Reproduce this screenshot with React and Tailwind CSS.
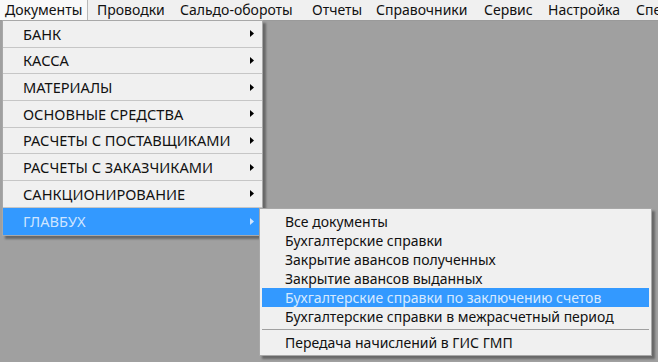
const TOP = [
  { label: "Документы", w: "w-[88px]", pl: "pl-[5px]", open: true },
  { label: "Проводки", w: "w-[86px]", pl: "pl-[9px]" },
  { label: "Сальдо-обороты", w: "w-[131px]", pl: "pl-[6px]" },
  { label: "Отчеты", w: "w-[64px]", pl: "pl-[7px]" },
  { label: "Справочники", w: "w-[108px]", pl: "pl-[7px]" },
  { label: "Сервис", w: "w-[64px]", pl: "pl-[7px]" },
  { label: "Настройка", w: "w-[88px]", pl: "pl-[7px]" },
  { label: "Специальные", w: "w-[100px]", pl: "pl-[7px]" },
];

const SECTIONS = [
  "БАНК",
  "КАССА",
  "МАТЕРИАЛЫ",
  "ОСНОВНЫЕ СРЕДСТВА",
  "РАСЧЕТЫ С ПОСТАВЩИКАМИ",
  "РАСЧЕТЫ С ЗАКАЗЧИКАМИ",
  "САНКЦИОНИРОВАНИЕ",
  "ГЛАВБУХ",
];

const GLAVBUH = [
  "Все документы",
  "Бухгалтерские справки",
  "Закрытие авансов полученных",
  "Закрытие авансов выданных",
  "Бухгалтерские справки по заключению счетов",
  "Бухгалтерские справки в межрасчетный период",
];

function Arrow({ light }) {
  return (
    <svg width="4" height="7" viewBox="0 0 4 7" className="shrink-0">
      <path d="M0 0 L4 3.5 L0 7 Z" fill={light ? "#cfe5ff" : "#000"} />
    </svg>
  );
}

export default function App() {
  return (
    <div className="relative w-[658px] h-[362px] overflow-hidden bg-[#a0a0a0] font-['Noto_Sans',sans-serif] text-[14px] text-[#111]">
      {/* ── Menu bar ── */}
      <div className="flex h-[21px] bg-[#f0f0f0] border-b border-[#9a9a9a] whitespace-nowrap overflow-hidden">
        {TOP.map((t) => (
          <div
            key={t.label}
            className={`${t.w} ${t.pl} shrink-0 flex items-center leading-none ${
              t.open ? "bg-[#f9f9f9] border-r border-[#b8b8b8]" : ""
            }`}
          >
            {t.label}
          </div>
        ))}
      </div>

      {/* ── Документы dropdown ── */}
      <div className="absolute left-[2px] top-[20px] w-[261px] bg-[#f0f0f0] border border-[#a8a8a8] text-[14.6px] shadow-[3px_3px_2px_rgba(0,0,0,0.35)]">
        {SECTIONS.map((s, i) => {
          const active = s === "ГЛАВБУХ";
          return (
            <div
              key={s}
              className={`h-[26.7px] flex items-center justify-between pl-[20px] pr-[8px] ${
                i < SECTIONS.length - 1 ? "border-b border-[#c6c6c6]" : ""
              } ${active ? "bg-[#3399ff] text-[#cfe5ff]" : ""}`}
            >
              <span className="leading-none">{s}</span>
              <Arrow light={active} />
            </div>
          );
        })}
      </div>

      {/* ── ГЛАВБУХ submenu ── */}
      <div className="absolute left-[259px] top-[208px] w-[393px] bg-[#f0f0f0] border border-[#a8a8a8] py-[3px] px-[2px] text-[14px] shadow-[3px_3px_2px_rgba(0,0,0,0.35)]">
        {GLAVBUH.map((s, i) => (
          <div
            key={s}
            className={`h-[19px] flex items-center pl-[23px] leading-none ${
              i === 4 ? "bg-[#3399ff] text-[#d6e9ff]" : ""
            }`}
          >
            {s}
          </div>
        ))}
        <div className="h-[7px] flex items-center">
          <div className="w-full border-t border-[#a0a0a0]" />
        </div>
        <div className="h-[19px] flex items-center pl-[23px] leading-none">
          Передача начислений в ГИС ГМП
        </div>
      </div>
    </div>
  );
}
